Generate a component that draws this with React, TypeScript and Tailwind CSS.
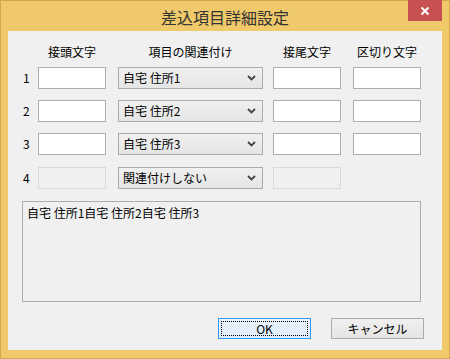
import React from "react";

const font = { fontFamily: '"Noto Sans CJK JP", "Liberation Sans", sans-serif' };

function TextBox({ disabled }: { disabled?: boolean }) {
  return (
    <div
      className={`w-[68px] h-[22px] border ${
        disabled ? "border-[#d9d9d9] bg-[#f0f0f0]" : "border-[#abadb3] bg-white"
      }`}
    />
  );
}

function Combo({ label }: { label: string }) {
  return (
    <div className="w-[145px] h-[22px] border border-[#acacac] bg-gradient-to-b from-[#f0f0f0] to-[#e5e5e5] flex items-center justify-between pl-[4px] pr-[6px]">
      <span className="text-[12px] text-black leading-none">{label}</span>
      <svg width="9" height="6" viewBox="0 0 9 6">
        <polyline points="1,1 4.5,4.5 8,1" fill="none" stroke="#444" strokeWidth="1.8" />
      </svg>
    </div>
  );
}

// one row of the mapping table
function Row({ num, label, last }: { num: string; label: string; last?: boolean }) {
  return (
    <div className="flex items-center h-[22px]">
      <div className="w-[30px] pl-[15px] text-[12px] leading-none text-black">{num}</div>
      <TextBox disabled={last} />
      <div className="w-[12px]" />
      <Combo label={label} />
      <div className="w-[10px]" />
      <TextBox disabled={last} />
      <div className="w-[12px]" />
      {!last && <TextBox />}
    </div>
  );
}

export default function App() {
  const rows = ["自宅 住所1", "自宅 住所2", "自宅 住所3"];

  return (
    <div style={font} className="w-[450px] h-[359px] bg-[#f0c96a] border border-[#d4a94e] flex flex-col">
      {/* Title bar */}
      <div className="relative h-[30px] flex items-center justify-center">
        <span className="text-[16px] text-[#333] leading-none mt-[2px]">差込項目詳細設定</span>
        <div className="absolute top-[-1px] right-[7px] w-[34px] h-[21px] bg-[#c75050] flex items-center justify-center">
          <svg width="10" height="10" viewBox="0 0 10 10">
            <path d="M1.5 1.5 L8.5 8.5 M8.5 1.5 L1.5 8.5" stroke="white" strokeWidth="2" />
          </svg>
        </div>
      </div>

      {/* Client area */}
      <div className="ml-[7px] w-[434px] h-[319px] bg-[#f0f0f0] flex flex-col">
        <div className="flex h-[36px] items-center text-[12px] text-black pt-[6px] leading-none">
          <div className="w-[30px]" />
          <div className="w-[68px] text-center">接頭文字</div>
          <div className="w-[12px]" />
          <div className="w-[145px] text-center">項目の関連付け</div>
          <div className="w-[10px]" />
          <div className="w-[68px] text-center">接尾文字</div>
          <div className="w-[12px]" />
          <div className="w-[68px] text-center">区切り文字</div>
        </div>

        <div className="flex flex-col gap-[11px]">
          {rows.map((r, i) => (
            <Row key={i} num={String(i + 1)} label={r} />
          ))}
          <div className="mt-[1px]">
            <Row num="4" label="関連付けしない" last />
          </div>
        </div>

        <div className="mt-[12px] ml-[14px] w-[399px] h-[101px] border border-[#abadb3] bg-[#f0f0f0] px-[4px] pt-[5px] text-[12px] leading-none text-black">
          自宅 住所1自宅 住所2自宅 住所3
        </div>

        <div className="flex mt-[16px] ml-[210px] gap-[20px]">
          <button className="w-[93px] h-[21px] border border-[#3399ff] bg-gradient-to-b from-[#ecf4fc] to-[#dcecfc] p-[2px]">
            <div className="w-full h-full border border-dotted border-black flex items-center justify-center text-[12px] leading-none text-black">
              OK
            </div>
          </button>
          <button className="w-[93px] h-[21px] border border-[#acacac] bg-gradient-to-b from-[#f0f0f0] to-[#e5e5e5] flex items-center justify-center text-[12px] leading-none text-black">
            キャンセル
          </button>
        </div>
      </div>
    </div>
  );
}
